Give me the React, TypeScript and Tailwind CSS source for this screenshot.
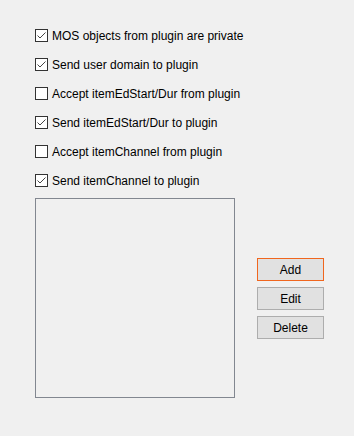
import React from "react";

const items: { label: string; checked: boolean }[] = [
  { label: "MOS objects from plugin are private", checked: true },
  { label: "Send user domain to plugin", checked: true },
  { label: "Accept itemEdStart/Dur from plugin", checked: false },
  { label: "Send itemEdStart/Dur to plugin", checked: true },
  { label: "Accept itemChannel from plugin", checked: false },
  { label: "Send itemChannel to plugin", checked: true },
];

function CheckRow({ label, checked }: { label: string; checked: boolean }) {
  return (
    <div className="flex items-start h-[13px]">
      <div className="w-[13px] h-[13px] border border-[#333333] bg-white flex-none relative">
        {checked && (
          <svg width="11" height="11" viewBox="0 0 11 11" className="absolute left-0 top-0">
            <path d="M1.5 5.5 L4 8 L9.5 2.5" fill="none" stroke="#444444" strokeWidth="1" />
          </svg>
        )}
      </div>
      <span className="ml-[4px] mt-[1px] text-[12px] leading-[13px] text-black whitespace-nowrap">{label}</span>
    </div>
  );
}

function Btn({ label, focused }: { label: string; focused?: boolean }) {
  return (
    <button
      className={`w-[67px] h-[23px] bg-[#e1e1e1] border text-[12px] text-black leading-none flex items-center justify-center ${
        focused ? "border-[#f0661e]" : "border-[#adadad]"
      }`}
    >
      {label}
    </button>
  );
}

export default function App() {
  return (
    <div
      className="w-[354px] h-[436px] bg-[#f0f0f0] pt-[29px] pl-[35px]"
      style={{ fontFamily: '"Liberation Sans", Arial, sans-serif' }}
    >
      <div className="flex flex-col gap-[16px]">
        {items.map((it) => (
          <CheckRow key={it.label} label={it.label} checked={it.checked} />
        ))}
      </div>
      <div className="flex mt-[11px]">
        <div className="w-[200px] h-[200px] border border-[#828790] bg-[#f0f0f0]" />
        <div className="flex flex-col gap-[6px] ml-[22px] mt-[60px]">
          <Btn label="Add" focused />
          <Btn label="Edit" />
          <Btn label="Delete" />
        </div>
      </div>
    </div>
  );
}
